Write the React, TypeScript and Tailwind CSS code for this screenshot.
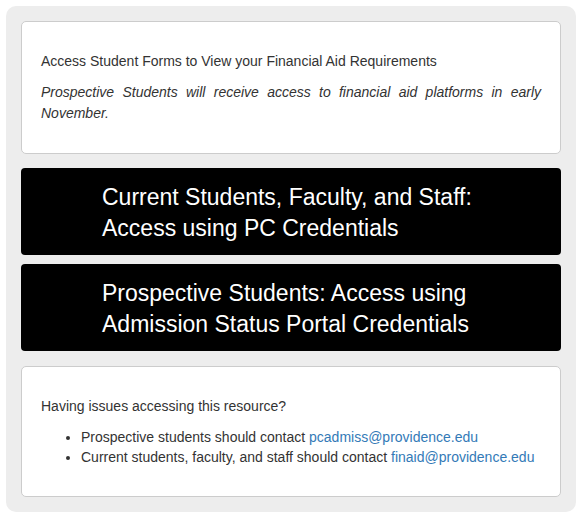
import React from 'react';

const font = { fontFamily: '"Liberation Sans", Arial, sans-serif' };

function AccessButton({ lines }: { lines: string[] }) {
  return (
    <a
      href="#"
      className="block rounded-[4px] bg-black pl-[81px] pr-[20px] pt-[14px] pb-[11px] text-[23px] leading-[31px] text-white"
    >
      {lines.map((l) => (
        <span key={l} className="block">
          {l}
        </span>
      ))}
    </a>
  );
}

export default function App() {
  return (
    <div className="min-h-[517px] bg-white pt-[6px] pl-[6px]" style={font}>
      <div className="w-[570px] h-[506px] rounded-[10px] bg-[#ededed] p-[15px] text-[14px] text-[#333]">
        <div className="rounded-[5px] border border-[#cccccc] bg-white px-[19px] pt-[29px] pb-[29px]">
          <p className="leading-[20px]">Access Student Forms to View your Financial Aid Requirements</p>
          <p className="mt-[11px] text-justify italic leading-[21px]">
            Prospective Students will receive access to financial aid platforms in early November.
          </p>
        </div>

        <div className="mt-[14px] flex flex-col gap-[9px]">
          <AccessButton lines={['Current Students, Faculty, and Staff:', 'Access using PC Credentials']} />
          <AccessButton lines={['Prospective Students: Access using', 'Admission Status Portal Credentials']} />
        </div>

        <div className="mt-[15px] rounded-[5px] border border-[#cccccc] bg-white px-[19px] pt-[29px] pb-[29px]">
          <p className="leading-[20px]">Having issues accessing this resource?</p>
          <ul className="mt-[11px] list-disc pl-[40px] leading-[20px]">
            <li>
              Prospective students should contact{' '}
              <a href="#" className="text-[#337ab7]">pcadmiss@providence.edu</a>
            </li>
            <li>
              Current students, faculty, and staff should contact{' '}
              <a href="#" className="text-[#337ab7]">finaid@providence.edu</a>
            </li>
          </ul>
        </div>
      </div>
    </div>
  );
}
